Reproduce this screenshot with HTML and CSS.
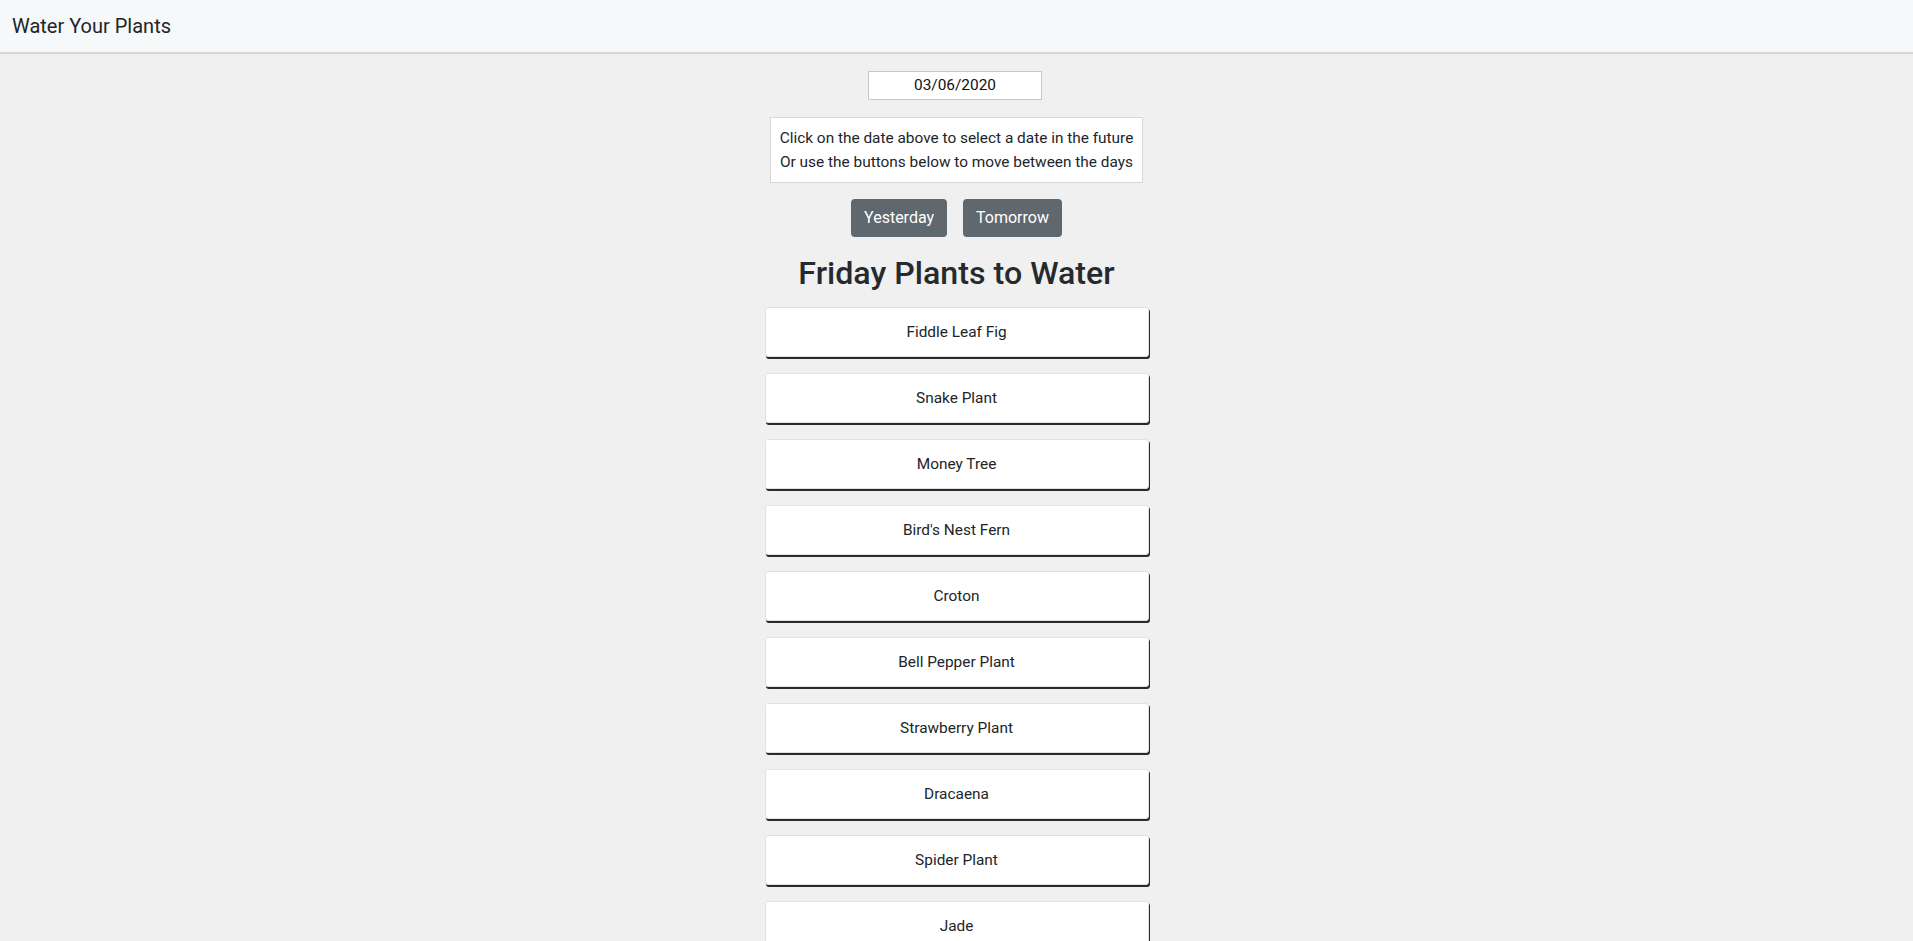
FILE: index.html
```html
<!DOCTYPE html>
<html lang="en">
<head>
<meta charset="utf-8">
<title>Water Your Plants</title>
<link rel="stylesheet" href="styles.css">
</head>
<body>
<header class="navbar">
  <span class="brand">Water Your Plants</span>
</header>
<main class="main">
  <div class="date-input">03/06/2020</div>
  <div class="info">
    <div>Click on the date above to select a date in the future</div>
    <div>Or use the buttons below to move between the days</div>
  </div>
  <div class="buttons">
    <button class="btn">Yesterday</button>
    <button class="btn">Tomorrow</button>
  </div>
  <h1 class="title">Friday Plants to Water</h1>
  <ul class="plants">
    <li class="plant">Fiddle Leaf Fig</li>
    <li class="plant">Snake Plant</li>
    <li class="plant">Money Tree</li>
    <li class="plant">Bird's Nest Fern</li>
    <li class="plant">Croton</li>
    <li class="plant">Bell Pepper Plant</li>
    <li class="plant">Strawberry Plant</li>
    <li class="plant">Dracaena</li>
    <li class="plant">Spider Plant</li>
    <li class="plant">Jade</li>
  </ul>
</main>
</body>
</html>
```
FILE: styles.css
```css
* { box-sizing: border-box; }
html, body {
  margin: 0;
  padding: 0;
  background: #f0f0f0;
  font-family: Roboto, "Liberation Sans", sans-serif;
  color: #212529;
  font-size: 15.4px;
  line-height: 1.5;
}
.navbar {
  height: 54px;
  background: #f7f8fa;
  border-bottom: 2px solid #d6d6d6;
  display: flex;
  align-items: center;
  padding: 0 12px;
}
.brand {
  font-size: 20px;
  color: #212529;
}
.main {
  display: flex;
  flex-direction: column;
  align-items: center;
  padding-top: 17px;
}
.date-input {
  width: 174px;
  height: 29px;
  margin-left: -3px;
  background: #fff;
  border: 1px solid #c8c8c8;
  text-align: center;
  line-height: 27px;
  color: #111;
}
.info {
  margin-top: 17px;
  background: #fff;
  border: 1px solid #d8d8d8;
  padding: 8px 9px;
  text-align: center;
  line-height: 24px;
}
.buttons {
  margin-top: 16px;
  display: flex;
  gap: 16px;
}
.btn {
  font-family: inherit;
  font-size: 16px;
  background: #5f686f;
  color: #fff;
  border: none;
  border-radius: 4px;
  height: 38px;
  padding: 0 13px;
  line-height: 38px;
}
.title {
  margin: 14px 0 12px;
  font-size: 32.2px;
  font-weight: 500;
  line-height: 44px;
  color: #262a2e;
}
.plants {
  list-style: none;
  margin: 0;
  padding: 0;
  display: flex;
  flex-direction: column;
  gap: 16px;
}
.plant {
  width: 384px;
  height: 50px;
  padding-top: 1px;
  background: #fff;
  border: 1px solid #e2e2e2;
  border-radius: 3px;
  box-shadow: 1px 2px 0 #2a2a2a;
  display: flex;
  align-items: center;
  justify-content: center;
}
```
